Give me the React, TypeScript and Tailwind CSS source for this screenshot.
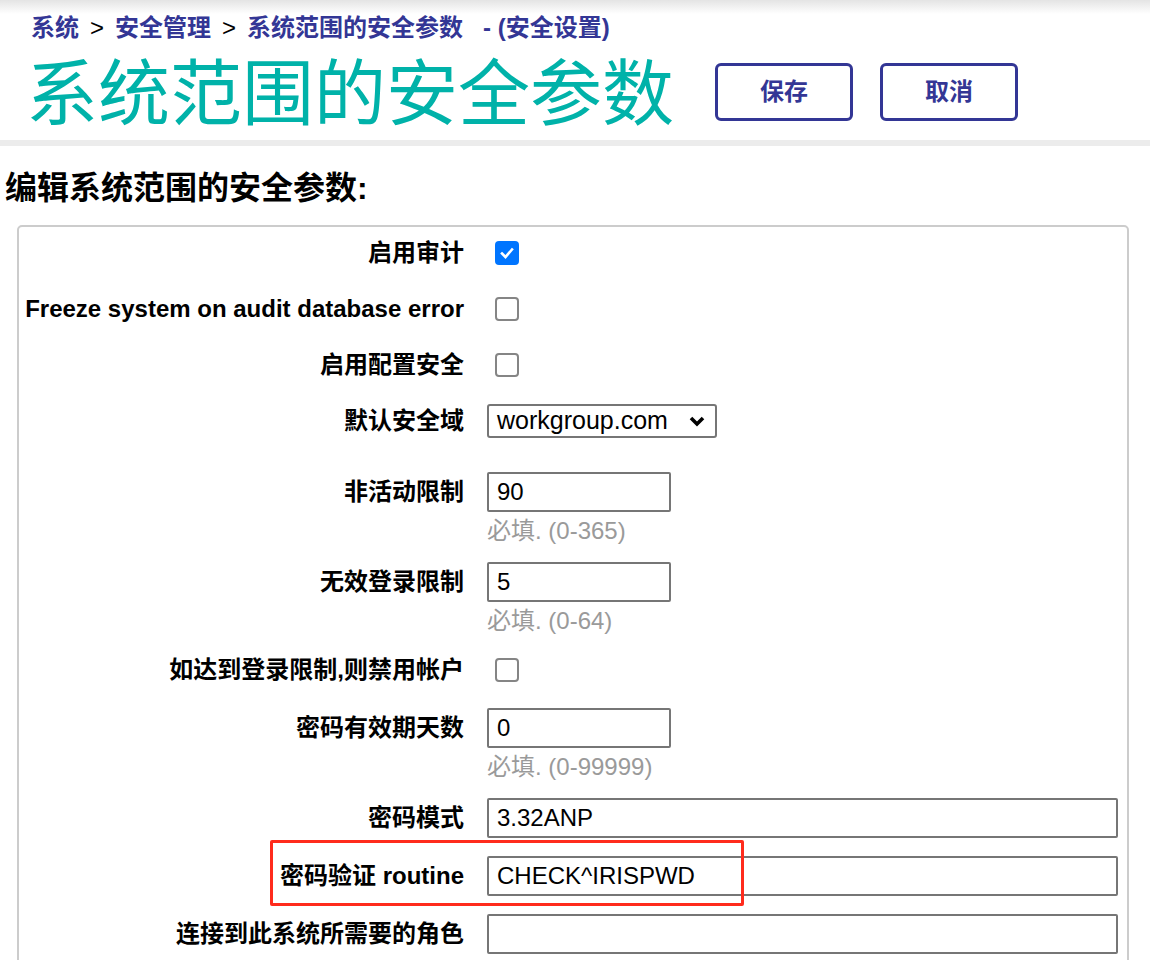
import React from "react";

const FONT = { fontFamily: '"Liberation Sans", "Noto Sans CJK SC", sans-serif' };

function Label({ text, h }: { text: string; h: string }) {
  return (
    <div className={`w-[445px] shrink-0 text-right text-[24px] font-bold text-black ${h}`}>{text}</div>
  );
}

function Checkbox({ checked }: { checked?: boolean }) {
  if (checked) {
    return (
      <div className="ml-[8px] flex h-[24px] w-[24px] items-center justify-center rounded-[4px] bg-[#0075ff]">
        <svg width="16" height="16" viewBox="0 0 16 16">
          <polyline points="3,8.5 6.5,12 13,4.5" fill="none" stroke="white" strokeWidth="2.6" strokeLinecap="square" />
        </svg>
      </div>
    );
  }
  return <div className="ml-[8px] h-[24px] w-[24px] rounded-[4px] border-2 border-[#858585] bg-white" />;
}

function CheckRow({ label, checked, mt }: { label: string; checked?: boolean; mt: string }) {
  return (
    <div className={`flex items-start ${mt}`}>
      <Label text={label} h="leading-[24px]" />
      <div className="ml-[23px]">
        <Checkbox checked={checked} />
      </div>
    </div>
  );
}

function InputRow({
  label,
  value,
  hint,
  wide,
  mt,
}: {
  label: string;
  value: string;
  hint?: string;
  wide?: boolean;
  mt: string;
}) {
  return (
    <div className={`flex items-start ${mt}`}>
      <Label text={label} h="leading-[40px]" />
      <div className="ml-[23px] flex flex-col">
        <div
          className={`flex h-[40px] items-center rounded-[2px] border-2 border-[#767676] bg-white pl-[8px] text-[24px] text-black ${
            wide ? "w-[631px]" : "w-[184px]"
          }`}
        >
          {value}
        </div>
        {hint && <div className="mt-[5px] text-[24px] leading-[28px] text-[#9a9a9a]">{hint}</div>}
      </div>
    </div>
  );
}

export default function App() {
  return (
    <div className="relative min-h-[960px] w-[1150px] overflow-hidden bg-white" style={FONT}>
      {/* header */}
      <div className="bg-[linear-gradient(to_bottom,#e4e4e4_0px,#ffffff_14px)]">
        <div className="flex items-center pl-[31px] pt-[14px] text-[24px] font-bold leading-[28px] text-[#333695]">
          <span>系统</span>
          <span className="mx-[11px] font-normal text-black">&gt;</span>
          <span>安全管理</span>
          <span className="mx-[11px] font-normal text-black">&gt;</span>
          <span>系统范围的安全参数</span>
          <span className="ml-[20px]">- (安全设置)</span>
        </div>
        <div className="mt-[12px] flex h-[86px] items-start pl-[26px]">
          <div className="text-[72px] font-normal leading-[80px] text-[#00b2a9]">系统范围的安全参数</div>
          <button className="ml-[41px] mt-[9px] flex h-[58px] w-[138px] items-center justify-center rounded-[6px] border-[3px] border-[#333695] bg-white text-[24px] font-bold text-[#333695]">
            保存
          </button>
          <button className="ml-[27px] mt-[9px] flex h-[58px] w-[138px] items-center justify-center rounded-[6px] border-[3px] border-[#333695] bg-white text-[24px] font-bold text-[#333695]">
            取消
          </button>
        </div>
        <div className="h-[6px] bg-[#ececec]" />
      </div>

      <div className="mt-[22px] pl-[5px] text-[32px] font-bold leading-[40px] text-black">编辑系统范围的安全参数:</div>

      <div className="ml-[17px] mt-[17px] w-[1112px] rounded-[5px] border-2 border-[#cccccc] pb-[40px]">
        <CheckRow label="启用审计" checked mt="mt-[14px]" />
        <CheckRow label="Freeze system on audit database error" mt="mt-[32px]" />
        <CheckRow label="启用配置安全" mt="mt-[32px]" />
        <div className="mt-[27px] flex items-start">
          <Label text="默认安全域" h="leading-[34px]" />
          <div className="ml-[23px] flex h-[34px] w-[230px] items-center justify-between rounded-[3px] border-2 border-[#767676] bg-white pl-[8px] pr-[10px] text-[25px] text-black">
            <span>workgroup.com</span>
            <svg width="16" height="11" viewBox="0 0 16 11">
              <polyline points="2,2 8,8 14,2" fill="none" stroke="black" strokeWidth="3.6" />
            </svg>
          </div>
        </div>
        <InputRow label="非活动限制" value="90" hint="必填. (0-365)" mt="mt-[34px]" />
        <InputRow label="无效登录限制" value="5" hint="必填. (0-64)" mt="mt-[17px]" />
        <CheckRow label="如达到登录限制,则禁用帐户" mt="mt-[23px]" />
        <InputRow label="密码有效期天数" value="0" hint="必填. (0-99999)" mt="mt-[26px]" />
        <InputRow label="密码模式" value="3.32ANP" wide mt="mt-[17px]" />
        <InputRow label="密码验证 routine" value="CHECK^IRISPWD" wide mt="mt-[18px]" />
        <InputRow label="连接到此系统所需要的角色" value="" wide mt="mt-[18px]" />
      </div>

      {/* red annotation box */}
      <div className="absolute left-[270px] top-[840px] h-[66px] w-[474px] rounded-[2px] border-[3px] border-[#ff2b1c]" />
    </div>
  );
}
